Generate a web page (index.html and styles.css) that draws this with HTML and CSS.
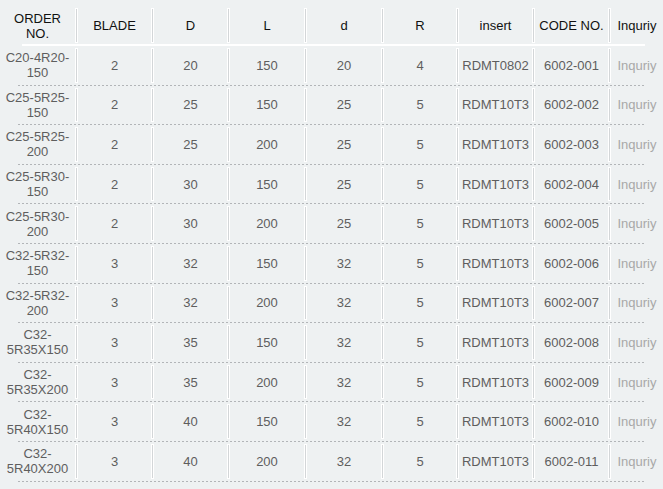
FILE: index.html
```html
<!DOCTYPE html>
<html>
<head>
<meta charset="utf-8">
<link rel="stylesheet" href="styles.css">
</head>
<body>
<div class="table">
  <div class="row head">
    <div class="cell">ORDER NO.</div><div class="cell">BLADE</div><div class="cell">D</div><div class="cell">L</div><div class="cell">d</div><div class="cell">R</div><div class="cell">insert</div><div class="cell">CODE NO.</div><div class="cell">Inquriy</div>
  </div>
  <div class="row item">
    <div class="cell">C20-4R20-150</div><div class="cell">2</div><div class="cell">20</div><div class="cell">150</div><div class="cell">20</div><div class="cell">4</div><div class="cell">RDMT0802</div><div class="cell">6002-001</div><div class="cell link">Inquriy</div>
  </div>
  <div class="row item">
    <div class="cell">C25-5R25-150</div><div class="cell">2</div><div class="cell">25</div><div class="cell">150</div><div class="cell">25</div><div class="cell">5</div><div class="cell">RDMT10T3</div><div class="cell">6002-002</div><div class="cell link">Inquriy</div>
  </div>
  <div class="row item">
    <div class="cell">C25-5R25-200</div><div class="cell">2</div><div class="cell">25</div><div class="cell">200</div><div class="cell">25</div><div class="cell">5</div><div class="cell">RDMT10T3</div><div class="cell">6002-003</div><div class="cell link">Inquriy</div>
  </div>
  <div class="row item">
    <div class="cell">C25-5R30-150</div><div class="cell">2</div><div class="cell">30</div><div class="cell">150</div><div class="cell">25</div><div class="cell">5</div><div class="cell">RDMT10T3</div><div class="cell">6002-004</div><div class="cell link">Inquriy</div>
  </div>
  <div class="row item">
    <div class="cell">C25-5R30-200</div><div class="cell">2</div><div class="cell">30</div><div class="cell">200</div><div class="cell">25</div><div class="cell">5</div><div class="cell">RDMT10T3</div><div class="cell">6002-005</div><div class="cell link">Inquriy</div>
  </div>
  <div class="row item">
    <div class="cell">C32-5R32-150</div><div class="cell">3</div><div class="cell">32</div><div class="cell">150</div><div class="cell">32</div><div class="cell">5</div><div class="cell">RDMT10T3</div><div class="cell">6002-006</div><div class="cell link">Inquriy</div>
  </div>
  <div class="row item">
    <div class="cell">C32-5R32-200</div><div class="cell">3</div><div class="cell">32</div><div class="cell">200</div><div class="cell">32</div><div class="cell">5</div><div class="cell">RDMT10T3</div><div class="cell">6002-007</div><div class="cell link">Inquriy</div>
  </div>
  <div class="row item">
    <div class="cell">C32-5R35X150</div><div class="cell">3</div><div class="cell">35</div><div class="cell">150</div><div class="cell">32</div><div class="cell">5</div><div class="cell">RDMT10T3</div><div class="cell">6002-008</div><div class="cell link">Inquriy</div>
  </div>
  <div class="row item">
    <div class="cell">C32-5R35X200</div><div class="cell">3</div><div class="cell">35</div><div class="cell">200</div><div class="cell">32</div><div class="cell">5</div><div class="cell">RDMT10T3</div><div class="cell">6002-009</div><div class="cell link">Inquriy</div>
  </div>
  <div class="row item">
    <div class="cell">C32-5R40X150</div><div class="cell">3</div><div class="cell">40</div><div class="cell">150</div><div class="cell">32</div><div class="cell">5</div><div class="cell">RDMT10T3</div><div class="cell">6002-010</div><div class="cell link">Inquriy</div>
  </div>
  <div class="row item">
    <div class="cell">C32-5R40X200</div><div class="cell">3</div><div class="cell">40</div><div class="cell">200</div><div class="cell">32</div><div class="cell">5</div><div class="cell">RDMT10T3</div><div class="cell">6002-011</div><div class="cell link">Inquriy</div>
  </div>
</div>
</body>
</html>
```

FILE: styles.css
```css
html, body {
  margin: 0;
  padding: 0;
  background: #eef1f2;
}
body {
  font-family: "Liberation Sans", Arial, sans-serif;
  font-size: 13px;
  line-height: 15px;
  color: #5e5e5e;
}
.table {
  width: 663px;
}
.row {
  display: grid;
  grid-template-columns: 75px 76px 76px 77px 77px 75px 76px 76px 55px;
  box-sizing: border-box;
}
.head {
  height: 46px;
  padding: 8px 0 3px;
  color: #111;
  background: linear-gradient(#fff, #fff) 22px 44px / 623px 2px no-repeat;
}
.item {
  height: 39.6px;
  padding: 2px 0 3px;
  background: repeating-linear-gradient(90deg, #b2b5b8 0 2px, transparent 2px 4px) 18px 100% / 627px 1px no-repeat;
}
.cell {
  display: flex;
  align-items: center;
  justify-content: center;
  text-align: center;
  padding: 0 2px;
  min-width: 0;
}
.cell + .cell {
  padding: 0 1px 0 4px;
  background:
    linear-gradient(#d3d6d8, #d3d6d8) 1px 1px / 1px calc(100% - 2px) no-repeat,
    linear-gradient(#ffffff, #ffffff) 0 0 / 3px 100% no-repeat;
}
.link {
  color: #a8a8a8;
}
```
